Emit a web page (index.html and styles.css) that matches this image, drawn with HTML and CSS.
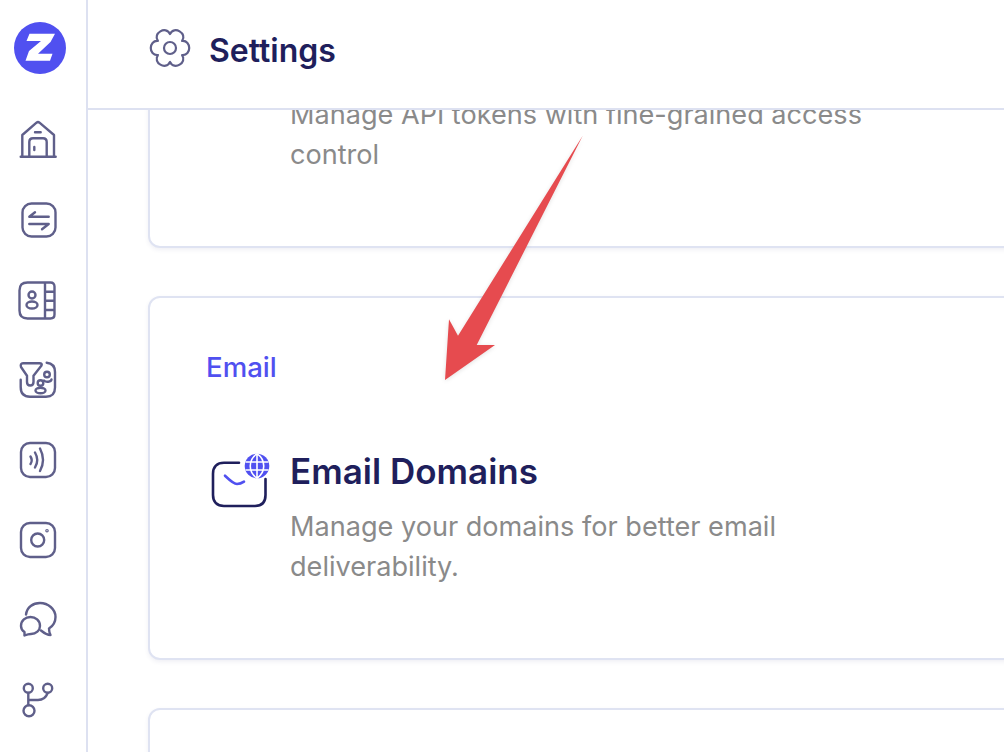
FILE: index.html
```html
<!DOCTYPE html>
<html lang="en">
<head>
    <meta charset="UTF-8">
    <meta name="viewport" content="width=device-width, initial-scale=1.0">
    <title>Settings</title>
    <link rel="stylesheet" href="styles.css">
</head>
<body>

    <div class="app">
        <!-- Sidebar -->
        <aside class="sidebar">
            <svg class="logo" viewBox="0 0 52 52">
                <circle cx="26" cy="26" r="26" fill="#5050f0"/>
                <path d="M15.5 11.7H41L36.5 20 24 31.7H38.5L36 38.7H11.5L15 29 27 19H12.5Z" fill="#fff"/>
            </svg>
            <nav class="nav">
                <svg class="nav-icon" viewBox="0 0 40 40">
                    <path d="M2.7 36.7H37.7M4.3 36.7V15L18.5 2.7Q20 1.5 21.5 2.7L36 15V36.7M17 12.3H22.7M11.3 36.7V22Q11.3 18.3 15 18.3H25Q28.7 18.3 28.7 22V36.7M16.3 27V30"/>
                </svg>
                <svg class="nav-icon" viewBox="0 0 40 40">
                    <rect x="4.5" y="3.5" width="33" height="33" rx="9"/>
                    <path d="M30.7 16.7H11.3L17 12.3M11.3 24H30.7L24 29.3"/>
                </svg>
                <svg class="nav-icon" viewBox="0 0 40 40">
                    <path d="M27 2.5H9.5Q1.5 2.5 1.5 10.5V30.5Q1.5 38.5 9.5 38.5H32.5Q36.5 38.5 36.5 34.5V6.5Q36.5 2.5 32.5 2.5H27V38.5M27 11.7H36.5M27 20.7H36.5M27 30H36.5"/>
                    <circle cx="14" cy="15" r="3.5"/>
                    <ellipse cx="14" cy="25" rx="5.5" ry="3.5"/>
                </svg>
                <svg class="nav-icon" viewBox="0 0 40 40">
                    <path d="M5 3.3H21.5Q24.5 3.3 23.5 5.5L15.5 15.7V22Q15.5 25.5 12.2 25.5 9 25.5 9 22V15.7L3 7Q2 3.3 5 3.3Z"/>
                    <path d="M2.7 19.7V27Q2.7 36.7 12 36.7H28Q37 36.7 37 27.5V12Q37 3.5 28.7 2.7"/>
                    <circle cx="29" cy="14.5" r="2.8"/>
                    <path d="M26 20.5C28 22.5 33 22 33.5 19.5"/>
                    <circle cx="22.5" cy="23" r="2.8"/>
                    <ellipse cx="22.5" cy="30.5" rx="5" ry="2.7"/>
                </svg>
                <svg class="nav-icon" viewBox="0 0 40 40">
                    <rect x="3" y="3" width="34" height="34" rx="9"/>
                    <path d="M12.5 16.5Q15 20.5 12.5 24M17 12.5Q21.5 20 17 27.5M22 8.5Q28 20 22 31"/>
                </svg>
                <svg class="nav-icon" viewBox="0 0 40 40">
                    <rect x="3" y="3" width="34" height="34" rx="9"/>
                    <circle cx="19.7" cy="20" r="6.5"/>
                    <circle cx="29" cy="10.7" r="0.6"/>
                </svg>
                <svg class="nav-icon" viewBox="0 0 40 40">
                    <path d="M8 14.5C9 7 15 3 22 3 30 3 37.5 9 37.5 17 37.5 22 35 26 31 28.5 31 31 31.5 33 32.5 35 29 35 26 33 23 30.5"/>
                    <path d="M6.5 32C4 30.5 3 28.5 3 26 3 20.5 7.5 17 12.5 17 17.5 17 22 20.5 22 26 22 30.5 18 34 13 34 11 34 9 34.5 6.5 35.5Z"/>
                </svg>
                <svg class="nav-icon" viewBox="0 0 40 40">
                    <circle cx="10.3" cy="8.3" r="4.5"/>
                    <circle cx="29.7" cy="8.3" r="4.5"/>
                    <circle cx="11" cy="30.7" r="5.5"/>
                    <path d="M10.3 13V25M10.3 20H20Q27 20 29.7 13"/>
                </svg>
            </nav>
        </aside>

        <div class="main">
            <header class="topbar">
                <svg class="gear" viewBox="-1 -1 42 42">
                    <path d="M32.1 13C41.6 12.1 41.6 27.9 32.1 27 37.6 34.8 24 42.65 20 34 16 42.65 2.4 34.8 7.9 27-1.6 27.9-1.6 12.1 7.9 13 2.4 5.2 16-2.65 20 6 24-2.65 37.6 5.2 32.1 13Z"/>
                    <circle cx="20" cy="20" r="6"/>
                </svg>
                <h1 class="page-title">Settings</h1>
            </header>

            <div class="content">
                <section class="card card-top">
                    <p class="desc">Manage API tokens with fine-grained access control</p>
                </section>

                <section class="card">
                    <div class="card-label">Email</div>
                    <div class="item">
                        <svg class="item-icon" viewBox="0 0 64 64">
                            <path class="envelope" d="M33 13.7H18C11 13.7 7 17.7 7 24.7V46C7 53 11 57 18 57H49C56 57 59.5 53 59.5 46V30"/>
                            <path class="smile" d="M19 26.7C24 31.5 28 35 31 35 33 35 36 34 38 32.7"/>
                            <circle cx="51" cy="17" r="12.3" fill="#5050f0"/>
                            <path class="globe-lines" d="M51 4.7V29.3M39.5 13H62.5M39.5 21H62.5M51 4.7C42 11 42 23 51 29.3M51 4.7C60 11 60 23 51 29.3"/>
                        </svg>
                        <div>
                            <h2 class="item-title">Email Domains</h2>
                            <p class="desc">Manage your domains for better email deliverability.</p>
                        </div>
                    </div>
                </section>

                <section class="card card-empty"></section>
            </div>
        </div>

        <!-- Red annotation arrow -->
        <svg class="arrow" viewBox="0 0 150 255">
            <path d="M142.7 5.7 36.7 215H55L5 250 9 189.3 18 205.7Z" fill="#e64b4f"/>
        </svg>
    </div>

</body>
</html>
```

FILE: styles.css
```css
* {
    box-sizing: border-box;
}
body {
    margin: 0;
    font-family: Inter, "Liberation Sans", sans-serif;
    background-color: #fff;
}
.app {
    position: relative;
    display: flex;
    height: 752px;
    overflow: hidden;
}
.sidebar {
    flex: none;
    width: 88px;
    padding: 22px 0 0 14px;
    border-right: 2px solid #dde1f1;
}
.logo {
    display: block;
    width: 52px;
    height: 52px;
    margin-bottom: 46px;
}
.nav {
    display: flex;
    flex-direction: column;
    gap: 40px;
    padding-left: 4px;
}
.nav-icon {
    display: block;
    width: 40px;
    height: 40px;
    fill: none;
    stroke: #5f5f8a;
    stroke-width: 2.4;
    stroke-linecap: round;
    stroke-linejoin: round;
}
.main {
    flex: 1;
    min-width: 0;
    display: flex;
    flex-direction: column;
}
.topbar {
    flex: none;
    display: flex;
    align-items: center;
    gap: 18px;
    height: 110px;
    padding: 0 0 8px 61px;
    border-bottom: 2px solid #dde1f1;
}
.gear {
    width: 42px;
    height: 42px;
    margin-bottom: 4px;
    fill: none;
    stroke: #5f5f8a;
    stroke-width: 2.2;
    stroke-linejoin: round;
}
.page-title {
    margin: 0;
    font-size: 32px;
    font-weight: 600;
    color: #1f1f5c;
}
.content {
    flex: 1;
    min-height: 0;
    overflow: hidden;
    padding-left: 60px;
}
.card {
    width: 1000px;
    margin-bottom: 48px;
    padding: 49px 56px 71px;
    background-color: #fff;
    border: 2px solid #dfe3f2;
    border-radius: 12px;
    box-shadow: 0 2px 4px rgba(60, 70, 130, 0.08);
}
.card-top {
    margin-top: -17px;
    padding: 0 56px 71px 140px;
}
.card-label {
    margin-bottom: 62px;
    font-size: 27.6px;
    font-weight: 500;
    line-height: 40px;
    color: #5050f0;
}
.item {
    display: flex;
    gap: 20px;
}
.item-icon {
    flex: none;
    width: 64px;
    height: 64px;
}
.envelope {
    fill: none;
    stroke: #1f1f5c;
    stroke-width: 2.6;
    stroke-linecap: round;
}
.smile {
    fill: none;
    stroke: #5050f0;
    stroke-width: 2.6;
    stroke-linecap: round;
}
.globe-lines {
    fill: none;
    stroke: #fff;
    stroke-width: 1.6;
}
.item-title {
    margin: 0 0 14px;
    font-size: 35px;
    line-height: 44px;
    font-weight: 600;
    color: #1f1f5c;
}
.desc {
    max-width: 600px;
    margin: 0;
    font-size: 27.1px;
    line-height: 40px;
    color: #8a8a8a;
}
.card-empty {
    height: 200px;
}
.arrow {
    position: absolute;
    left: 440px;
    top: 130px;
    width: 150px;
    height: 255px;
    filter: drop-shadow(0 1px 2px rgba(0, 0, 0, 0.12));
}
```
